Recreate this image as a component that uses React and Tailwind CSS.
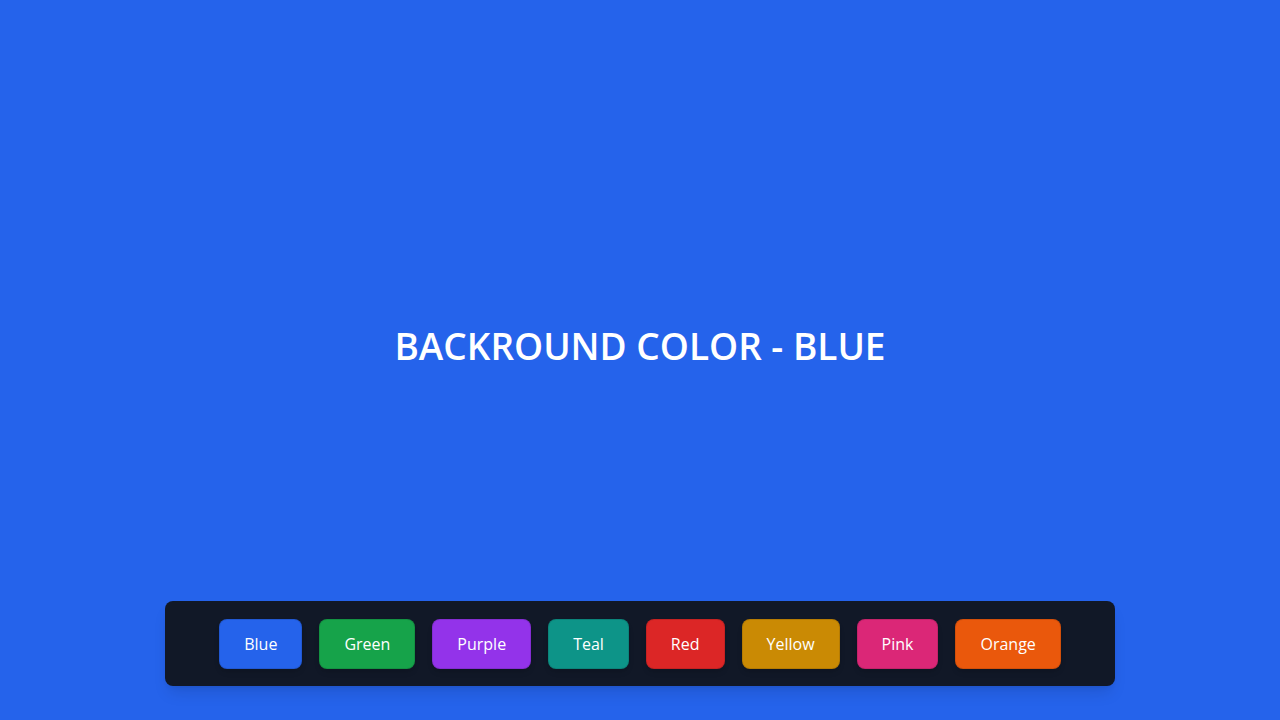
import { useState } from 'react'

// Tailwind 3 palette hex values (v4 defaults are oklch and render more saturated)
const COLORS = [
  { name: 'Blue',   bg: 'bg-[#2563eb]' },
  { name: 'Green',  bg: 'bg-[#16a34a]' },
  { name: 'Purple', bg: 'bg-[#9333ea]' },
  { name: 'Teal',   bg: 'bg-[#0d9488]' },
  { name: 'Red',    bg: 'bg-[#dc2626]' },
  { name: 'Yellow', bg: 'bg-[#ca8a04]' },
  { name: 'Pink',   bg: 'bg-[#db2777]' },
  { name: 'Orange', bg: 'bg-[#ea580c]' },
]

const App = () => {
  const [color, setColor] = useState(COLORS[0])

  return (
    <div
      className={`h-screen flex flex-col ${color.bg} transition-colors`}
      style={{ fontFamily: '"Open Sans", "Noto Sans", sans-serif' }}
    >
      <main className="flex-1 flex items-center justify-center pt-[89px]">
        <h1 className="text-white text-[37px] leading-none font-semibold">
          BACKROUND COLOR - {color.name.toUpperCase()}
        </h1>
      </main>

      <div className="flex justify-center pb-[34px]">
        <div className="w-[950px] h-[85px] bg-[#111827] rounded-lg shadow-lg flex items-center justify-center gap-[17px]">
          {COLORS.map((c) => (
            <button
              key={c.name}
              onClick={() => setColor(c)}
              className={`${c.bg} text-white text-base px-6 py-3 rounded-lg border border-black/10 shadow-md`}
            >
              {c.name}
            </button>
          ))}
        </div>
      </div>
    </div>
  )
}

export default App
